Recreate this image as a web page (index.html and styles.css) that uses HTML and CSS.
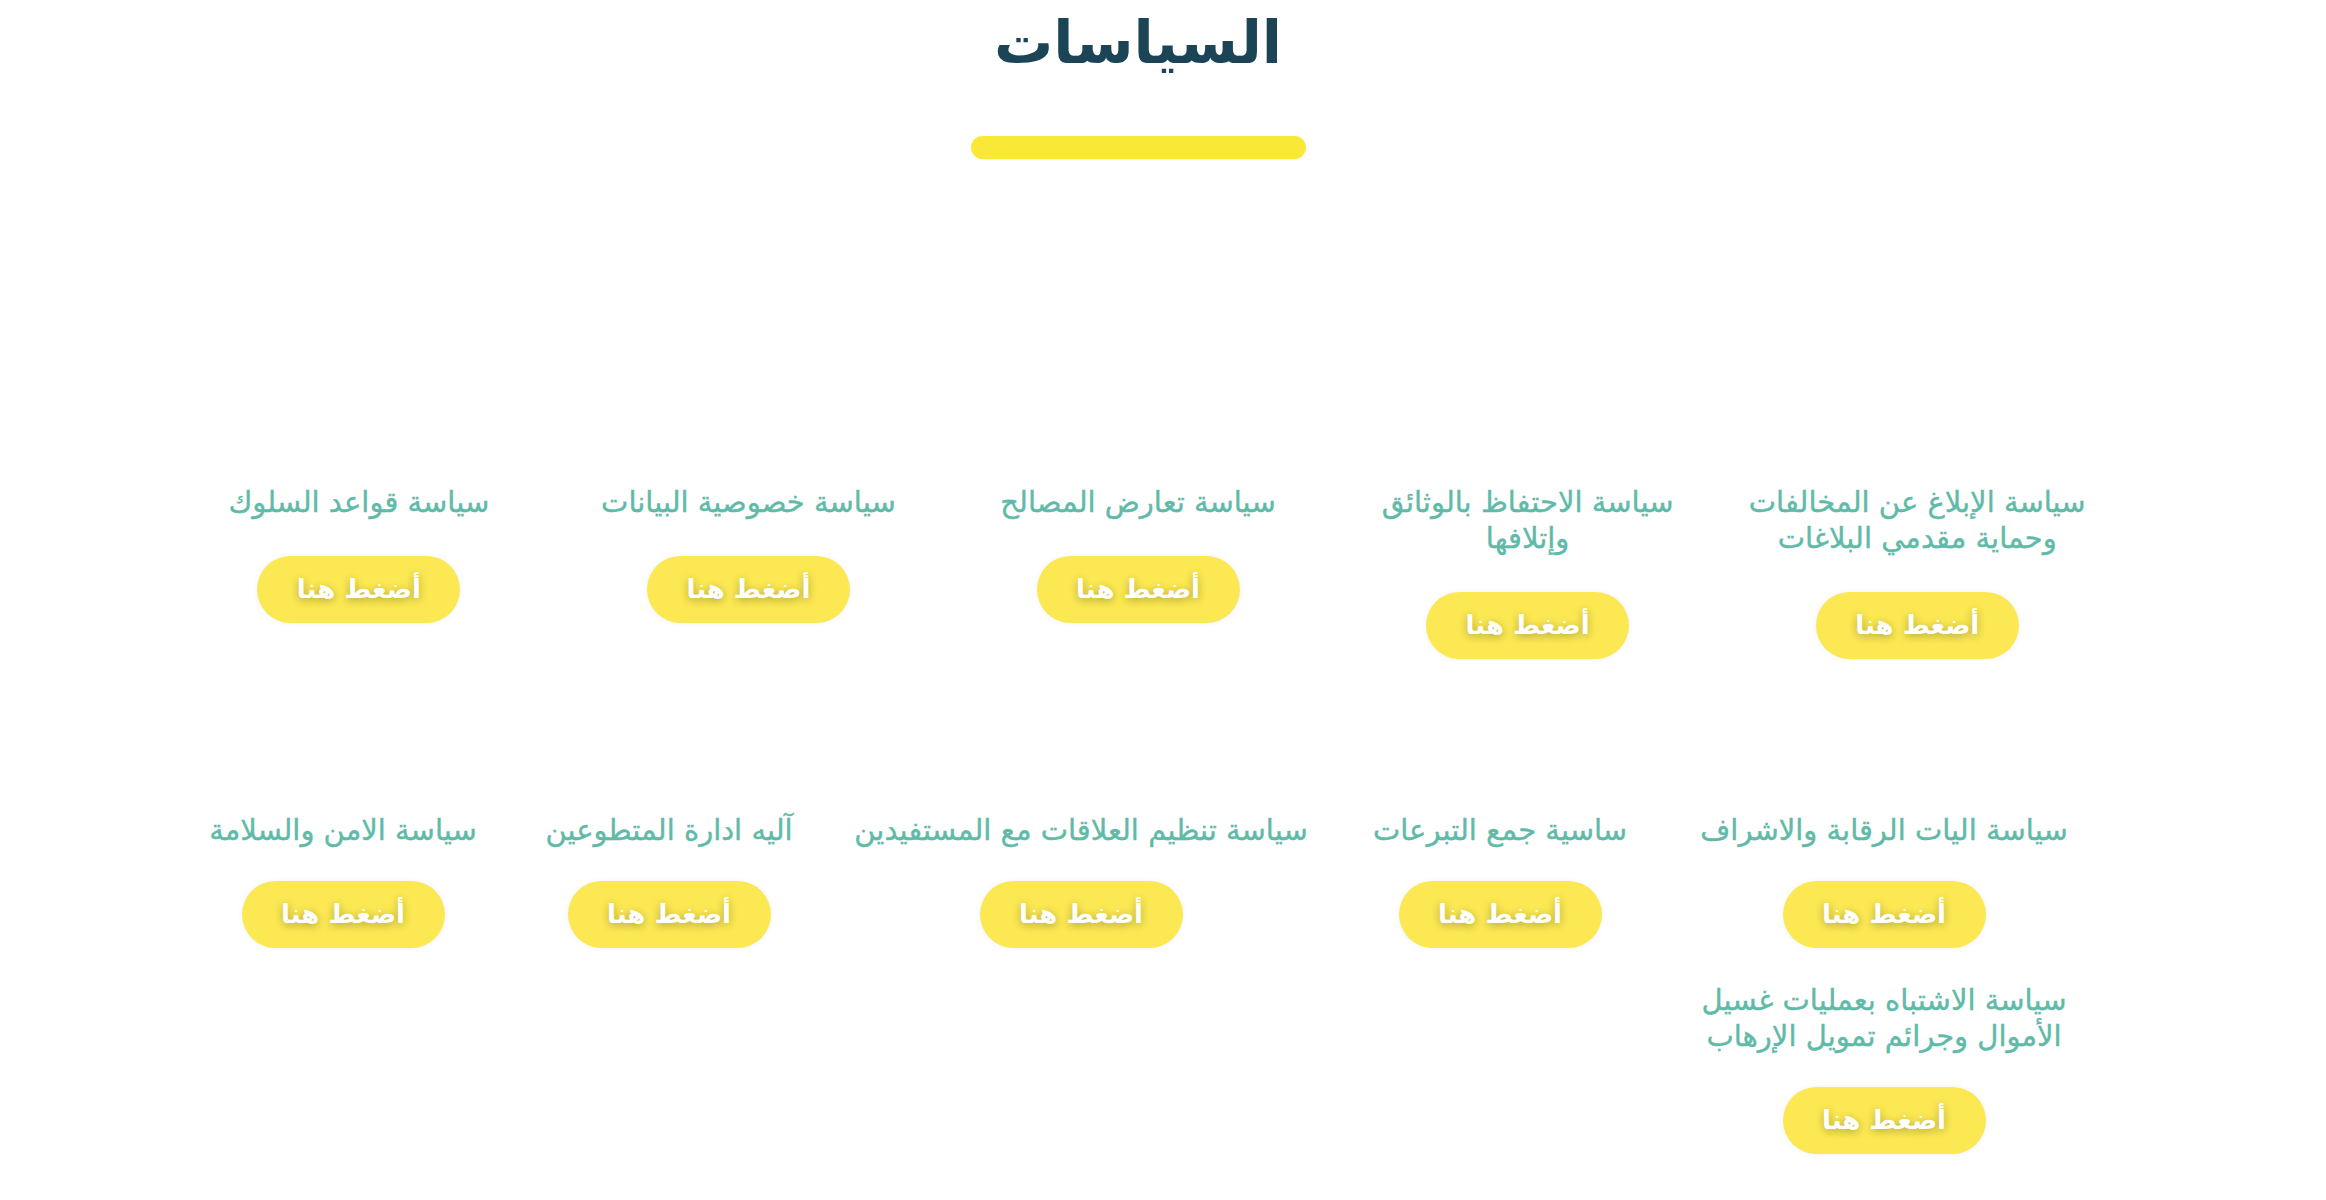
FILE: index.html
```html
<!DOCTYPE html>
<html lang="ar" dir="rtl">
  <head>
    <meta charset="UTF-8" />
    <meta name="viewport" content="width=device-width, initial-scale=1.0" />
    <title>السياسات</title>
    <link rel="stylesheet" href="styles.css">
  </head>
  <body>
    <section class="policies">
      <header>
        <h1>السياسات</h1>
        <div class="bar"></div>
      </header>

      <div class="row row-main">
        <div class="item">
          <p>سياسة الإبلاغ عن المخالفات<br>وحماية مقدمي البلاغات</p>
          <a class="btn" href="#">أضغط هنا</a>
        </div>
        <div class="item">
          <p>سياسة الاحتفاظ بالوثائق<br>وإتلافها</p>
          <a class="btn" href="#">أضغط هنا</a>
        </div>
        <div class="item">
          <p>سياسة تعارض المصالح</p>
          <a class="btn" href="#">أضغط هنا</a>
        </div>
        <div class="item">
          <p>سياسة خصوصية البيانات</p>
          <a class="btn" href="#">أضغط هنا</a>
        </div>
        <div class="item">
          <p>سياسة قواعد السلوك</p>
          <a class="btn" href="#">أضغط هنا</a>
        </div>
      </div>

      <div class="row row-more">
        <div class="item">
          <p>سياسة اليات الرقابة والاشراف</p>
          <a class="btn" href="#">أضغط هنا</a>
        </div>
        <div class="item">
          <p>ساسية جمع التبرعات</p>
          <a class="btn" href="#">أضغط هنا</a>
        </div>
        <div class="item">
          <p>سياسة تنظيم العلاقات مع المستفيدين</p>
          <a class="btn" href="#">أضغط هنا</a>
        </div>
        <div class="item">
          <p>آليه ادارة المتطوعين</p>
          <a class="btn" href="#">أضغط هنا</a>
        </div>
        <div class="item">
          <p>سياسة الامن والسلامة</p>
          <a class="btn" href="#">أضغط هنا</a>
        </div>
        <div class="item">
          <p>سياسة الاشتباه بعمليات غسيل<br>الأموال وجرائم تمويل الإرهاب</p>
          <a class="btn" href="#">أضغط هنا</a>
        </div>
      </div>
    </section>
  </body>
</html>
```

FILE: styles.css
```css
body {
  font-family: "DejaVu Sans", sans-serif;
  margin: 0;
  padding: 0;
  background: #fff;
}
.policies {
  width: 1948px;
  margin: 0 214px 0 164px;
  padding-bottom: 40px;
}
header {
  display: flex;
  flex-direction: column;
  align-items: center;
}
h1 {
  margin: 0;
  font-size: 59px;
  line-height: 86px;
  font-weight: bold;
  color: #1b4556;
}
.bar {
  width: 335px;
  height: 23px;
  margin-top: 50px;
  border-radius: 12px;
  background: #fae837;
}
.row {
  display: grid;
  align-items: start;
}
.row-main {
  grid-template-columns: repeat(5, 1fr);
  margin-top: 325px;
}
.row-more {
  grid-template-columns: 456px 312px 526px 298px 354px;
  row-gap: 34px;
  margin-top: 153px;
}
.item {
  display: flex;
  flex-direction: column;
  align-items: center;
  text-align: center;
}
.item p {
  margin: 0;
  font-size: 29px;
  line-height: 36px;
  color: #5fbaa8;
  -webkit-text-stroke: 0.4px #5fbaa8;
}
.btn {
  display: block;
  width: 203px;
  height: 67px;
  margin-top: 36px;
  border-radius: 34px;
  background: #fbe852;
  box-shadow: 0 0 6px rgba(0, 0, 0, 0.05);
  color: #fff;
  font-size: 26px;
  font-weight: bold;
  line-height: 67px;
  text-align: center;
  text-decoration: none;
  text-shadow: 0 2px 8px rgba(0, 0, 0, 0.3);
}
.row-more .btn {
  margin-top: 33px;
}
```
